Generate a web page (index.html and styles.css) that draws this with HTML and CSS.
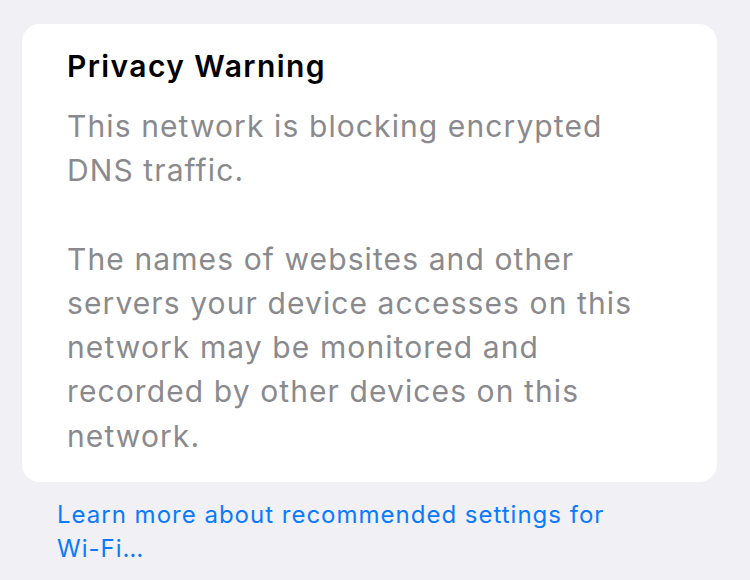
FILE: index.html
```html
<!DOCTYPE html>
<html>
<head>
  <title>Privacy Warning</title>
  <link rel="stylesheet" href="styles.css">
</head>
<body>
  <div class="page">
    <div class="card">
      <h2 class="card-title">Privacy Warning</h2>
      <p class="card-text">This network is blocking encrypted DNS traffic.</p>
      <p class="card-text">The names of websites and other servers your device accesses on this network may be monitored and recorded by other devices on this network.</p>
    </div>
    <a href="#" class="footer-link">Learn more about recommended settings for <span class="nowrap">Wi-Fi…</span></a>
  </div>
</body>
</html>
```

FILE: styles.css
```css
body {
  font-family: Inter, "Noto Sans", sans-serif;
  background-color: #f1f0f5;
  margin: 0;
  padding: 0;
}

.page {
  padding: 24px 33px 0 22px;
}

.card {
  background-color: white;
  border-radius: 18px;
  padding: 22px 45px 24px 45px;
}

.card-title {
  margin: 0 0 18px 0;
  font-size: 30px;
  font-weight: 600;
  line-height: 40px;
  letter-spacing: 1.4px;
  color: #000;
}

.card-text {
  margin: 0 0 44px 0;
  font-size: 30px;
  line-height: 44.3px;
  letter-spacing: 1.1px;
  color: #8a8a8e;
}

.card-text:last-child {
  margin-bottom: 0;
}

.footer-link {
  display: block;
  margin: 16px 60px 0 35px;
  font-size: 24px;
  line-height: 34px;
  letter-spacing: 1px;
  color: #0a7aff;
  text-decoration: none;
}

.nowrap {
  white-space: nowrap;
}
```
